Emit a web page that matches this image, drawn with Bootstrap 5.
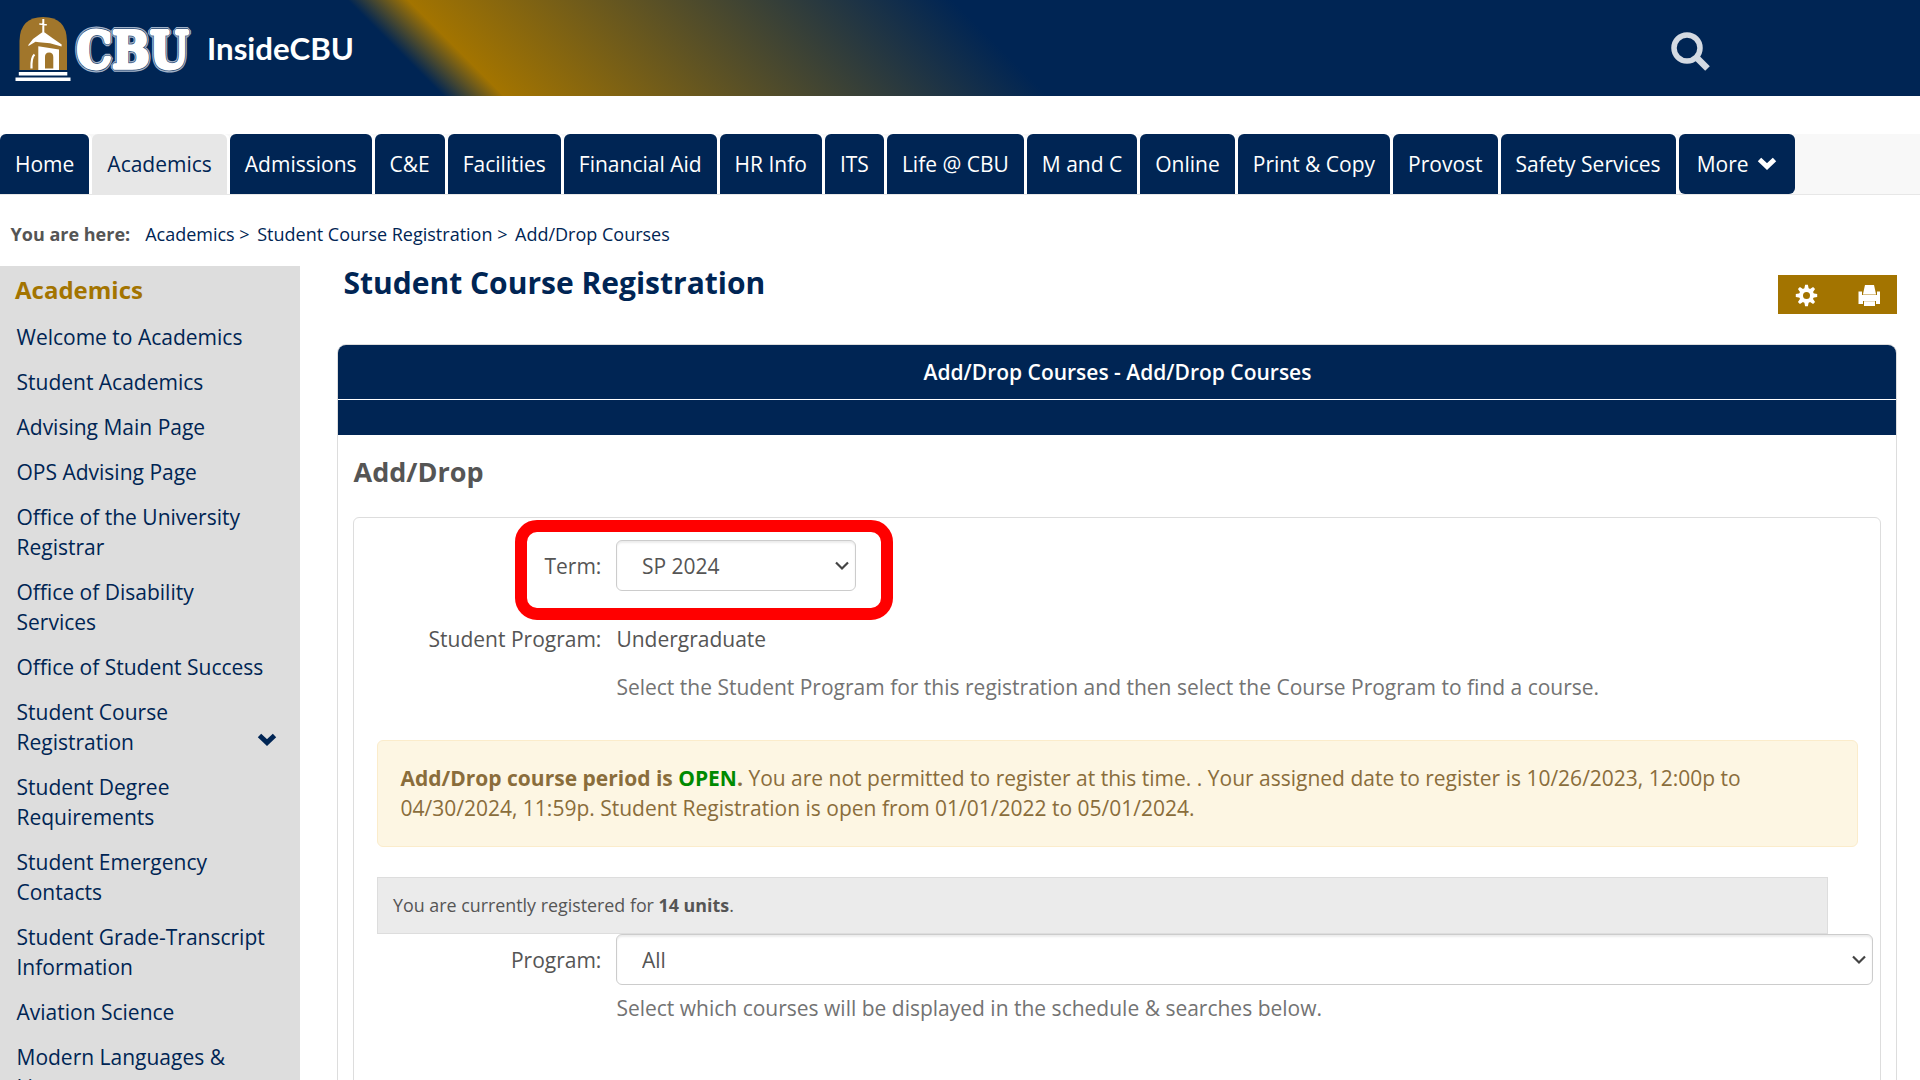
<!DOCTYPE html>
<html lang="en">
<head>
<meta charset="utf-8">
<meta name="viewport" content="width=device-width, initial-scale=1">
<title>InsideCBU - Student Course Registration</title>
<link rel="stylesheet" href="https://cdn.jsdelivr.net/npm/bootstrap@5.3.0/dist/css/bootstrap.min.css">
<style>
:root{--navy:#002554;--gold:#a37400;}
html,body{height:1080px;overflow:hidden}
body{font-family:"Open Sans","Noto Sans",sans-serif;font-size:21px;line-height:30px;color:#555;background:#fff}
a{text-decoration:none;color:var(--navy)}
.site-header{height:96px;background:linear-gradient(45deg,var(--navy) 22%,var(--gold) 25%,var(--navy) 52%)}
.search-btn{margin-right:208px}
.tabs-bar{margin-top:38px;height:61px;background:#f8f8f8;border-bottom:1px solid #e7e7e7;gap:3px}
.tabs-bar .nav-link{height:60px;padding:15px;color:#fff;background:var(--navy);border-radius:6px 6px 0 0;white-space:nowrap;box-shadow:3px 0 0 #fff}
.tabs-bar .nav-link.active{background:#e7e7e7;color:var(--navy)}
.tabs-bar .more-tab{border-radius:6px;padding:15px 18px;box-shadow:none}
.crumbs{padding:24px 0 0 10.500px;height:71px;font-size:18px;gap:7.600px}
.crumbs b{margin-right:7.400px}
.side-nav{width:300px;height:814px;background:#ddd;overflow:hidden;padding-top:9px}
.side-nav h2{font-size:24px;line-height:30px;font-weight:700;color:var(--gold);margin:0 0 9px 15px}
.side-nav .nav-link{padding:7.5px 30px 7.5px 16.500px;color:var(--navy)}
.side-nav .expand-mark{margin:0 -7px 9px 0}
.main-col{padding-left:37px;padding-right:23px}
.page-title{font-size:30px;line-height:34px;font-weight:700;color:var(--navy);padding-left:6.500px;margin:0}
.tool-box{width:119px;height:39px;margin-top:9px;background:var(--gold)}
.portlet{margin-top:30px;height:760px;border:1px solid #ddd;border-radius:9px 9px 0 0;overflow:hidden}
.portlet-title{height:55px;background:var(--navy);border-bottom:1px solid #fff;color:#fff;font-weight:600;font-size:21px;padding-left:1px}
.portlet-strip{height:35px;background:var(--navy)}
.portlet h3{font-size:27px;line-height:32px;font-weight:700;margin:21px 0 29px 15.500px}
.inner-box{margin:0 15px;height:640px;border:1px solid #ddd;border-radius:6px;padding:22px 7px 0 23px}
.form-line{display:grid;grid-template-columns:224.400px 1fr;column-gap:15px}
.form-line label{text-align:right}
.form-select{height:51px;font-size:21px;line-height:30px;color:#555;border:1px solid #ccc;border-radius:6px;padding:9px 40px 9px 24.500px;box-shadow:inset 0 2px 2px rgba(0,0,0,.075);background-image:url("data:image/svg+xml,%3Csvg xmlns='http://www.w3.org/2000/svg' viewBox='0 0 14 10'%3E%3Cpath fill='none' stroke='%23444' stroke-width='2.2' d='M1 1.5l6 6 6-6'/%3E%3C/svg%3E");background-size:14px 10px;background-position:right 6px center}
.term-select{width:240px}
.select-label{padding-top:11px}
.program-line{margin-top:33px}
.program-hint{margin-top:18px}
.hint{color:#737373}
.notice{margin:38px 15px 30px 0;padding:22px 22.500px;height:107px;background:#fdf6e3;border:1px solid #fbeccb;border-radius:6px;color:#8a6d3b}
.notice .open-word{color:#008a00}
.units-bar{width:1451px;height:57px;border:1px solid #ddd;background:#ebebeb;padding:12px 15px;font-size:17.850px}
.red-ring{left:515px;top:520px;width:378px;height:100px;border:12px solid #f00;border-radius:22px;z-index:5}
</style>
</head>
<body>
<header class="site-header d-flex justify-content-between">
  <svg width="370" height="96" viewBox="0 0 370 96" role="img" aria-label="CBU InsideCBU">
    <path fill="#a1762b" d="M19.500 70V41Q20 17 43.200 17Q66.500 17 67 41V70Z"/>
    <g fill="#fff">
      <path d="M42.300 19h2v13h-2zM39.300 23.200l7.500.8v1.600l-7.500-.8z"/>
      <path d="M43.300 31.500L53 38.500 61.700 44.500 61.500 46.500 50 43.300 39 42.300 35.500 41.800 28.500 46 28.300 45 33 39z"/>
      <path fill-rule="evenodd" d="M38.300 46.300L59 49.500V70H38.300zM45 68.500h8.300V57q0-4.500-4.200-4.500T45 57z"/>
      <path d="M34.500 54.500q-3.500 3-3 14" fill="none" stroke="#fff" stroke-width="2.200"/>
      <path d="M18.800 72h48.500v3.500H18.800zM15.500 77.500h55V81h-55z"/>
    </g>
    <g font-family="'DejaVu Serif','Liberation Serif',serif" font-weight="700" font-size="51" text-rendering="geometricPrecision" stroke-linejoin="bevel">
      <text x="76.500" y="67.500" textLength="112" lengthAdjust="spacingAndGlyphs" fill="#a3b3c8" stroke="#a3b3c8" stroke-width="7.500">CBU</text>
      <text x="76.500" y="67.500" textLength="112" lengthAdjust="spacingAndGlyphs" fill="#274873" stroke="#274873" stroke-width="5">CBU</text>
      <text x="76.500" y="67.500" textLength="112" lengthAdjust="spacingAndGlyphs" fill="#fff" stroke="#fff" stroke-width="3.500">CBU</text>
    </g>
    <text x="207" y="60" font-family="Lato,'Open Sans',sans-serif" font-weight="700" font-size="30.500" textLength="147" lengthAdjust="spacingAndGlyphs" fill="#fff">InsideCBU</text>
  </svg>
  <a href="#" class="search-btn" aria-label="Search"><svg width="42" height="96" viewBox="1670 0 42 96"><circle cx="1687" cy="48" r="13" fill="none" stroke="#d4dae2" stroke-width="5.500"/><path d="M1696 57l11.500 11.500" stroke="#d4dae2" stroke-width="6.500"/></svg></a>
</header>

<nav class="nav tabs-bar flex-nowrap">
  <a class="nav-link" href="#">Home</a>
  <a class="nav-link active" href="#">Academics</a>
  <a class="nav-link" href="#">Admissions</a>
  <a class="nav-link" href="#">C&amp;E</a>
  <a class="nav-link" href="#">Facilities</a>
  <a class="nav-link" href="#">Financial Aid</a>
  <a class="nav-link" href="#">HR Info</a>
  <a class="nav-link" href="#">ITS</a>
  <a class="nav-link" href="#">Life @ CBU</a>
  <a class="nav-link" href="#">M and C</a>
  <a class="nav-link" href="#">Online</a>
  <a class="nav-link" href="#">Print &amp; Copy</a>
  <a class="nav-link" href="#">Provost</a>
  <a class="nav-link" href="#">Safety Services</a>
  <a class="nav-link more-tab d-flex align-items-center" href="#">More
    <svg class="ms-2" width="20" height="16" viewBox="0 0 20 16"><path fill="none" stroke="#fff" stroke-width="5" d="M2.500 3.500l7.500 7 7.500-7"/></svg></a>
</nav>

<div class="crumbs d-flex">
  <b>You are here:</b>
  <a href="#">Academics &gt;</a><a href="#">Student Course Registration &gt;</a><a href="#">Add/Drop Courses</a>
</div>

<div class="d-flex">
  <aside class="side-nav flex-shrink-0">
    <h2>Academics</h2>
    <nav class="nav flex-column flex-nowrap">
      <a class="nav-link" href="#">Welcome to Academics</a>
      <a class="nav-link" href="#">Student Academics</a>
      <a class="nav-link" href="#">Advising Main Page</a>
      <a class="nav-link" href="#">OPS Advising Page</a>
      <a class="nav-link" href="#">Office of the University Registrar</a>
      <a class="nav-link" href="#">Office of Disability<br>Services</a>
      <a class="nav-link" href="#">Office of Student Success</a>
      <a class="nav-link d-flex justify-content-between align-items-end" href="#"><span>Student Course<br>Registration</span>
        <svg class="expand-mark flex-shrink-0" width="20" height="16" viewBox="0 0 20 16"><path fill="none" stroke="#002554" stroke-width="5" d="M2.500 3.500l7.500 7 7.500-7"/></svg></a>
      <a class="nav-link" href="#">Student Degree<br>Requirements</a>
      <a class="nav-link" href="#">Student Emergency<br>Contacts</a>
      <a class="nav-link" href="#">Student Grade-Transcript Information</a>
      <a class="nav-link" href="#">Aviation Science</a>
      <a class="nav-link" href="#">Modern Languages &amp;<br>Literature</a>
    </nav>
  </aside>

  <main class="main-col flex-grow-1">
    <div class="d-flex justify-content-between align-items-start">
      <h1 class="page-title">Student Course Registration</h1>
      <div class="tool-box">
        <svg width="119" height="39" viewBox="0 0 119 39">
          <g fill="#fff" transform="translate(28.500 20.500)">
            <circle r="7.400"/>
            <g id="teeth"><path d="M-1.400-10.700h2.800l.9 4.500h-4.600zM-1.400 10.700h2.800l.9-4.500h-4.600zM-10.700-1.400v2.800l4.500.9v-4.600zM10.700-1.400v2.800l-4.500.9v-4.600z"/></g>
            <use href="#teeth" transform="rotate(45)"/>
            <circle r="3.500" fill="#a37400"/>
          </g>
          <g fill="#fff">
            <path d="M87 10h9l2 9H85z"/>
            <path d="M80.500 16.500H84V20h15v-3.500h3V29h-4v-3H85v3h-4.500z"/>
            <path d="M86 27h11v4H86z"/>
          </g>
          <path d="M85 19.500h13" stroke="#d8c08c"/>
          <path d="M86 26.500h11" stroke="#eadfc4"/>
        </svg>
      </div>
    </div>

    <section class="portlet">
      <div class="portlet-title d-flex align-items-center justify-content-center">Add/Drop Courses - Add/Drop Courses</div>
      <div class="portlet-strip"></div>
      <h3>Add/Drop</h3>
      <div class="inner-box">
        <div class="form-line">
          <label for="term" class="select-label">Term:</label>
          <select id="term" class="form-select term-select"><option>SP 2024</option></select>
        </div>
        <div class="form-line program-line">
          <label>Student Program:</label><span>Undergraduate</span>
        </div>
        <div class="form-line hint program-hint"><span></span><span>Select the Student Program for this registration and then select the Course Program to find a course.</span></div>
        <div class="notice"><b>Add/Drop course period is </b><b class="open-word">OPEN</b><b>.</b> You are not permitted to register at this time. . Your assigned date to register is 10/26/2023, 12:00p to 04/30/2024, 11:59p. Student Registration is open from 01/01/2022 to 05/01/2024.</div>
        <div class="units-bar">You are currently registered for <b>14 units</b>.</div>
        <div class="form-line">
          <label for="program" class="select-label">Program:</label>
          <select id="program" class="form-select"><option>All</option></select>
        </div>
        <div class="form-line hint pt-2"><span></span><span>Select which courses will be displayed in the schedule &amp; searches below.</span></div>
      </div>
    </section>
  </main>
</div>
<div class="red-ring position-absolute"></div>
<script src="https://cdn.jsdelivr.net/npm/bootstrap@5.3.0/dist/js/bootstrap.bundle.min.js"></script>
</body>
</html>
